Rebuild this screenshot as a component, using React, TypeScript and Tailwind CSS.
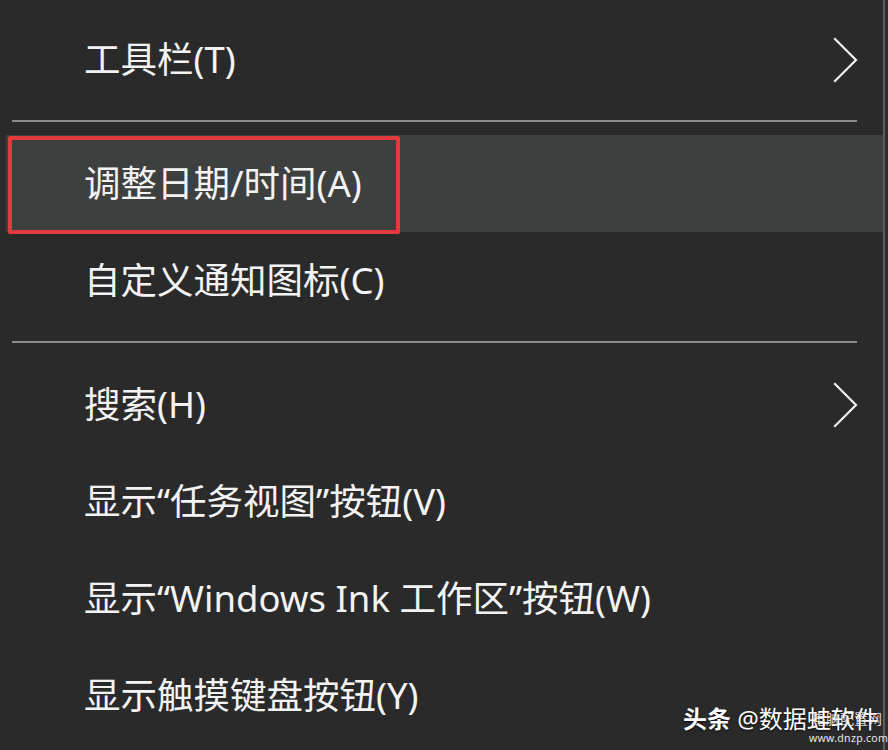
import React from "react";

const font = { fontFamily: '"Noto Sans", "Noto Sans CJK SC", sans-serif' };

function Chevron() {
  return (
    <svg width="26" height="46" viewBox="0 0 26 46" className="shrink-0">
      <polyline points="2,2 23,23 2,44" fill="none" stroke="#f4f4f4" strokeWidth="2.2" strokeLinecap="square" />
    </svg>
  );
}

function Row({ label, chevron }: { label: string; chevron?: boolean }) {
  return (
    <div className="h-[97px] flex items-center justify-between pl-[84px] pr-[24px]">
      <span className="text-[36.5px] leading-none text-[#f3f3f3] whitespace-nowrap">{label}</span>
      {chevron && <Chevron />}
    </div>
  );
}

function Separator() {
  return (
    <div className="h-[27px] pt-[12px]">
      <div className="ml-[12px] w-[845px] h-[2px] bg-[#8c8c8c]" />
    </div>
  );
}

export default function App() {
  return (
    <div className="w-[888px] h-[750px] bg-[#2a2a2a] relative overflow-hidden flex" style={font}>
      <div className="w-[883px] flex flex-col pt-[11px]">
        <Row label="工具栏(T)" chevron />
        <Separator />
        <div className="h-[97px] relative pl-[6px]">
          <div className="h-full bg-[#3e3f3f] flex items-center pl-[78px]">
            <span className="text-[36.5px] leading-none text-[#f3f3f3] whitespace-nowrap">调整日期/时间(A)</span>
          </div>
          <div className="absolute left-[8px] top-[1px] w-[392px] h-[98px] border-[4px] border-[#e33b3b] rounded-[2px]" />
        </div>
        <Row label="自定义通知图标(C)" />
        <Separator />
        <Row label="搜索(H)" chevron />
        <Row label="显示“任务视图”按钮(V)" />
        <Row label="显示“Windows Ink 工作区”按钮(W)" />
        <Row label="显示触摸键盘按钮(Y)" />
      </div>
      <div className="w-[2px] bg-[#5c5c5c]" />
      <div className="flex-1 bg-[#2e2e2e]" />

      <div className="absolute left-[683px] top-[701px] text-white text-[24px] leading-[36px] whitespace-nowrap [text-shadow:0_1px_2px_rgba(0,0,0,0.8)]">
        <span className="font-bold">头条</span>
        <span> @数据蛙软件</span>
      </div>
      <div className="absolute left-[812px] top-[709px] text-[#e8e8e8] text-[14px] leading-[20px] whitespace-nowrap opacity-90">
        电脑配置网
      </div>
      <div className="absolute left-[809px] top-[731px] text-[#e8e8e8] text-[10.5px] leading-[14px] tracking-[0.3px] whitespace-nowrap">
        www.dnzp.com
      </div>
    </div>
  );
}
